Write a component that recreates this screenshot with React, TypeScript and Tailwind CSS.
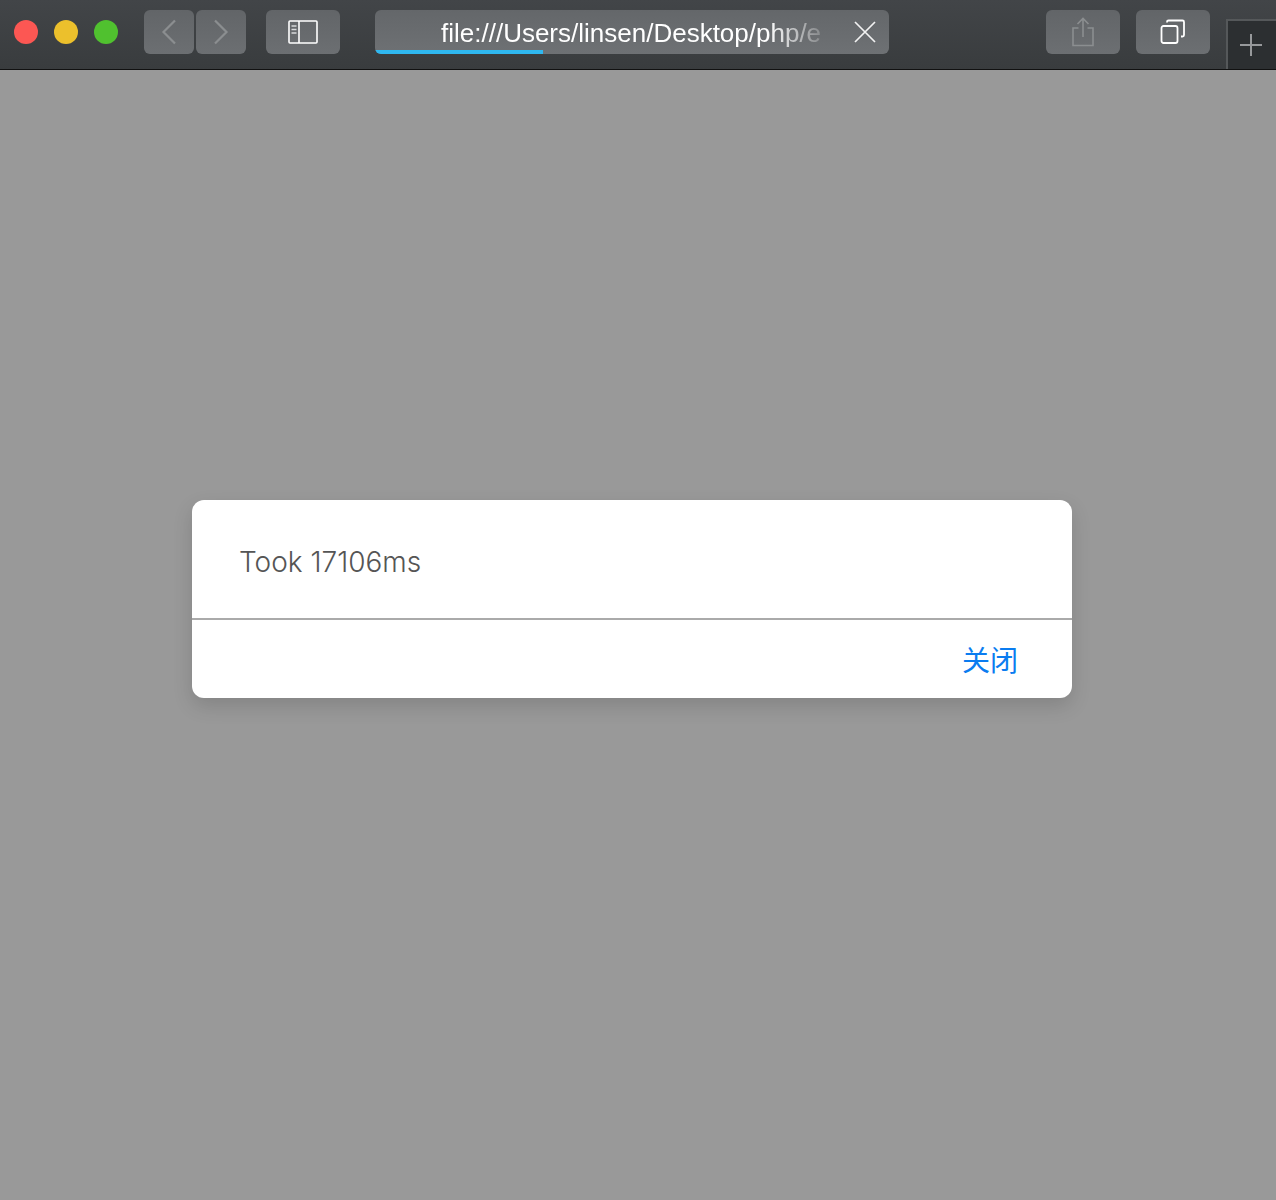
import type { ReactNode } from "react";

function ToolButton({ className, children }: { className: string; children: ReactNode }) {
  return (
    <div
      className={`flex h-[44px] shrink-0 items-center justify-center rounded-[6px] bg-gradient-to-b from-[#626568] to-[#6c6f72] ${className}`}
    >
      {children}
    </div>
  );
}

function Toolbar() {
  return (
    <header className="flex h-[70px] items-start border-b border-[#111] bg-gradient-to-b from-[#424548] to-[#393c3e] pt-[10px]">
      <div className="ml-[14px] mt-[10px] flex gap-4">
        <span className="h-6 w-6 rounded-full bg-[#fc5753]" />
        <span className="h-6 w-6 rounded-full bg-[#ecc02c]" />
        <span className="h-6 w-6 rounded-full bg-[#50c12f]" />
      </div>

      <div className="ml-[26px] flex gap-[2px]">
        <ToolButton className="w-[50px]">
          <svg width="16" height="26" viewBox="0 0 16 26" fill="none" stroke="#8b8e90" strokeWidth="2.2">
            <path d="M14 1.5 2.5 13 14 24.5" />
          </svg>
        </ToolButton>
        <ToolButton className="w-[50px]">
          <svg width="16" height="26" viewBox="0 0 16 26" fill="none" stroke="#8b8e90" strokeWidth="2.2">
            <path d="M2 1.5 13.5 13 2 24.5" />
          </svg>
        </ToolButton>
      </div>

      <ToolButton className="ml-5 w-[74px]">
        <svg width="30" height="24" viewBox="0 0 30 24" fill="none" stroke="#fff" strokeWidth="1.6">
          <rect x="1" y="1" width="28" height="22" rx="1" />
          <path d="M11 1v22" />
          <path d="M3.5 6h5M3.5 9.5h5M3.5 13h5" strokeWidth="1.5" stroke="#d8d9da" />
        </svg>
      </ToolButton>

      <div className="relative ml-[35px] flex h-[44px] w-[514px] shrink-0 items-center overflow-hidden rounded-[6px] bg-gradient-to-b from-[#64676a] to-[#6e7174]">
        <div className="ml-[66px] w-[380px] whitespace-nowrap pt-[2px] font-['Liberation_Sans',sans-serif] text-[26px] leading-[44px] text-[#fff] [mask-image:linear-gradient(to_right,#000_86%,rgba(0,0,0,0.2)_100%)]">
          file:///Users/linsen/Desktop/php/e
        </div>
        <svg className="ml-[32px]" width="24" height="24" viewBox="0 0 24 24" fill="none" stroke="#f2f2f2" strokeWidth="1.7">
          <path d="M2 2l20 20M22 2 2 22" />
        </svg>
        <div className="absolute bottom-0 left-0 h-[4px] w-[168px] bg-[#2fb8f0]" />
      </div>

      <ToolButton className="ml-auto w-[74px] ">
        <svg width="24" height="30" viewBox="0 0 24 30" fill="none" stroke="#8b8e90" strokeWidth="1.6">
          <path d="M7.5 11H2v17.5h20V11h-5.5" />
          <path d="M12 20V1.5M6.5 7 12 1.5 17.5 7" />
        </svg>
      </ToolButton>

      <ToolButton className="ml-4 w-[74px]">
        <svg width="26" height="26" viewBox="0 0 26 26" fill="none" stroke="#fff" strokeWidth="1.8">
          <rect x="1.5" y="7" width="16" height="17" rx="2" />
          <path d="M7 3.5V3a1.5 1.5 0 0 1 1.5-1.5h14A1.5 1.5 0 0 1 24 3v13a1.5 1.5 0 0 1-1.5 1.5H21" />
        </svg>
      </ToolButton>

      <div className="ml-[16px] mt-[9px] flex h-[50px] w-[50px] shrink-0 items-center justify-center border-l-2 border-t-2 border-[#55585a] bg-[#2c2f31] pr-[3px]">
        <svg width="24" height="24" viewBox="0 0 24 24" fill="none" stroke="#97999b" strokeWidth="2">
          <path d="M12 1v22M1 12h22" />
        </svg>
      </div>
    </header>
  );
}

export default function App() {
  return (
    <div className="min-h-[1200px] bg-[#999999]">
      <Toolbar />
      <main className="pt-[430px] pl-[192px]">
        <div className="w-[880px] rounded-[12px] bg-[#fff] shadow-[0_8px_20px_rgba(0,0,0,0.14)]">
          <div className="flex h-[120px] items-center border-b-2 border-[#aaaaaa] pl-[47px] pt-[5px] font-['Inter','Roboto',sans-serif] text-[28px] font-light text-[#555]">
            Took 17106ms
          </div>
          <div className="flex h-[78px] items-center justify-end pr-[54px] font-['Noto_Sans_CJK_SC',sans-serif] text-[28px] text-[#0a7cf0]">
            关闭
          </div>
        </div>
      </main>
    </div>
  );
}
